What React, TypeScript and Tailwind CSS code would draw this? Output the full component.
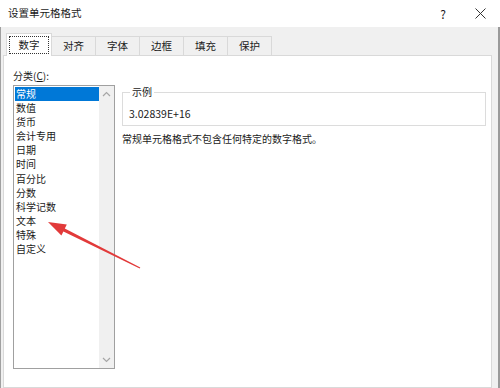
import React from 'react';

const FONT = { fontFamily: '"Noto Sans CJK SC", "Noto Sans", sans-serif' };

const tabs = ['数字', '对齐', '字体', '边框', '填充', '保护'];
const categories = ['常规', '数值', '货币', '会计专用', '日期', '时间', '百分比', '分数', '科学记数', '文本', '特殊', '自定义'];

function Chevron({ up }: { up?: boolean }) {
    return (
        <svg width="9" height="6" viewBox="0 0 9 6" className="text-[#a6a6a6]">
            <path d={up ? 'M1 5 L4.5 1.5 L8 5' : 'M1 1 L4.5 4.5 L8 1'} fill="none" stroke="currentColor" strokeWidth="1.2" />
        </svg>
    );
}

export default function App() {
    return (
        <div className="relative w-[500px] h-[388px] overflow-hidden flex flex-col bg-white text-[10px] text-[#1a1a1a]" style={FONT}>
            {/* Title bar */}
            <div className="h-[27px] shrink-0 flex items-center pl-[8px] bg-white">
                <span className="flex-1 leading-none text-[10.5px]">设置单元格格式</span>
                <span className="w-[14px] text-center text-[12px] leading-none mr-[25px]">?</span>
                <svg width="11" height="11" viewBox="0 0 11 11" className="mr-[14px]">
                    <path d="M0.5 0.5 L10.5 10.5 M10.5 0.5 L0.5 10.5" stroke="#333" strokeWidth="1" />
                </svg>
            </div>

            {/* Body */}
            <div className="flex-1 flex flex-col bg-[#f0f0f0] border-l border-[#a0a0a0] border-r-2 border-r-[#9a9a9a] pl-[2px] pr-[6px]">
                {/* Tabs */}
                <div className="h-[28px] shrink-0 flex items-end pl-[3px] relative z-10 text-[10.5px]">
                    {tabs.map((t, i) =>
                        i === 0 ? (
                            <div key={t} className="w-[46px] h-[23px] -mb-px bg-white border border-b-0 border-[#d9d9d9] flex items-center justify-center p-[2px]">
                                <div className="w-full h-full border border-dotted border-[#333] flex items-center justify-center">{t}</div>
                            </div>
                        ) : (
                            <div key={t} className="w-[44px] h-[19px] border border-b-0 border-l-0 border-[#d9d9d9] flex items-center justify-center">{t}</div>
                        )
                    )}
                </div>

                {/* Panel */}
                <div className="flex-1 bg-white border border-[#d9d9d9] flex flex-col pl-[9px] pt-[12px]">
                    <div className="leading-[16px] h-[16px]">
                        分类(<span className="underline">C</span>):
                    </div>
                    <div className="flex mt-[1px]">
                        {/* List box */}
                        <div className="w-[102px] h-[284px] border border-[#a0a0a0] flex shrink-0">
                            <div className="flex-1 pt-[1px] pl-[1px]">
                                {categories.map((c, i) => (
                                    <div
                                        key={c}
                                        className={`h-[14.1px] leading-[14px] pl-[1px] ${i === 0 ? 'bg-[#0078d7] text-white' : ''}`}
                                    >
                                        {c}
                                    </div>
                                ))}
                            </div>
                            <div className="w-[15px] bg-[#f0f0f0] flex flex-col items-center justify-between pt-[5px] pb-[5px]">
                                <Chevron up />
                                <Chevron />
                            </div>
                        </div>

                        {/* Right side */}
                        <div className="flex-1 ml-[7px] mr-[5px] flex flex-col">
                            <fieldset className="border border-[#dcdcdc] px-[6px] pb-[1px]">
                                <legend className="px-[2px] ml-[1px] leading-[14px]">示例</legend>
                                <div className="h-[20px] leading-[20px] mt-[5px] text-[10.5px]">3.02839E+16</div>
                            </fieldset>
                            <div className="mt-[5px] leading-[16px]">常规单元格格式不包含任何特定的数字格式。</div>
                        </div>
                    </div>
                </div>
            </div>

            {/* Red annotation arrow */}
            <svg className="absolute left-0 top-0 pointer-events-none" width="500" height="388" viewBox="0 0 500 388">
                <polygon
                    points="48,222 66.8,224.6 64.8,228.6 140.3,267.4 139.7,268.6 63.4,231.4 61.4,235.4"
                    fill="#e23a3a"
                />
            </svg>
        </div>
    );
}
